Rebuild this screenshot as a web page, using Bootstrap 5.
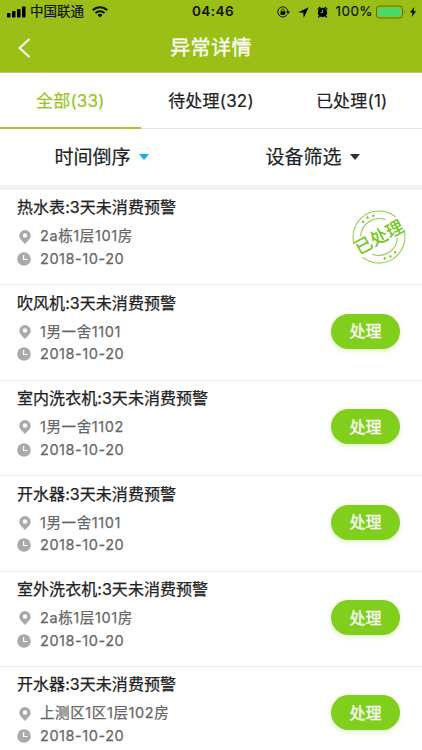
<!DOCTYPE html>
<html lang="zh-CN">
<head>
<meta charset="utf-8">
<meta name="viewport" content="width=device-width, initial-scale=1">
<title>异常详情</title>
<link rel="stylesheet" href="https://cdn.jsdelivr.net/npm/bootstrap@5.3.0/dist/css/bootstrap.min.css">
<style>
body{font-family:Inter,"Noto Sans CJK SC",sans-serif;color:#222;background:#fff;height:750px;overflow:hidden;line-height:1}
.top-area{background:#9bbf17;height:73px;border-bottom:1px solid #b9c97b}
.status{height:24px;color:#111;font-size:13px;padding:0 6px 0 7px}
.carrier{font-size:13.5px;margin-left:4px;-webkit-text-stroke:.2px}
.clock{font-size:13.5px;font-weight:600;letter-spacing:.45px;left:192px;top:5px}
.pct{font-size:13.5px;letter-spacing:.4px;margin:0 3px 0 8px;-webkit-text-stroke:.2px}
.title-bar{height:48px;color:#fff}
.title-bar h1{font-size:20px;font-weight:400;letter-spacing:.4px;line-height:1;-webkit-text-stroke:.3px}
.back{left:18px;top:14px}
.tabs{height:56px;border-bottom:1px solid #e2e2e2;font-size:17px}
.tabs a{color:#222;text-decoration:none;letter-spacing:.2px;-webkit-text-stroke:.2px}
.tabs a.on{color:#97c51d;box-shadow:inset 0 -2px #a3c52c;height:56px}
.filters{height:56px;font-size:19px;-webkit-text-stroke:.2px}
.filters .col{padding-right:8px}
.caret{width:0;height:0;border:5px solid transparent;border-top:6px solid #333;border-bottom:0;margin-left:8px}
.caret.blue{border-top-color:#1ca8ee}
.strip{height:5px;background:#f1f1f1}
.entry{height:95.45px;border-bottom:1px solid #ebebeb;padding:9.300px 22px 0 17px}
.entry h2{font-size:16px;font-weight:400;line-height:17px;margin:0 0 9px;letter-spacing:.05px;white-space:nowrap;-webkit-text-stroke:.25px}
.meta{height:22.5px;font-size:14.5px;color:#666;letter-spacing:.6px;white-space:nowrap;-webkit-text-stroke:.25px}
.meta svg{width:14px;height:14px;margin-right:9px}
.date{letter-spacing:.55px}
.go{width:69px;height:35px;background:#80cf1c;color:#fff;font-size:16px;font-weight:400;border:0;box-shadow:0 2px 5px #80cf1c40;margin-top:19px;line-height:1;-webkit-text-stroke:.3px}
.go:hover{background:#80cf1c;color:#fff}
.stamp{margin:9px -7px 0 0;overflow:visible}
</style>
<script src="https://cdn.jsdelivr.net/npm/bootstrap@5.3.0/dist/js/bootstrap.bundle.min.js"></script>
</head>
<body>
<svg width="0" height="0" class="position-absolute">
<symbol id="pin" viewBox="0 0 14 14"><path fill="#aaa" fill-rule="evenodd" d="M8 0a5.700 5.700 0 0 0-5.700 5.700C2.300 9 5.500 11 8 14c2.500-3 5.700-5 5.700-8.300A5.700 5.700 0 0 0 8 0m0 3.300a2.200 2.200 0 1 1 0 4.400 2.200 2.200 0 0 1 0-4.400"/></symbol>
<symbol id="time" viewBox="0 0 14 14"><circle cx="7" cy="7" r="6.800" fill="#aaa"/><path d="M6.600 3v4.500h4" fill="none" stroke="#fff" stroke-width="1.200"/></symbol>
</svg>
<header class="top-area">
  <div class="status d-flex align-items-center position-relative">
    <svg width="19" height="12" viewBox="0 0 19 12"><rect y="7" width="3.500" height="4.500" rx=".8"/><rect x="5" y="5" width="3.500" height="6.500" rx=".8"/><rect x="10" y="3" width="3.500" height="8.500" rx=".8"/><rect x="15" y="0.500" width="3.500" height="11" rx=".8"/></svg>
    <span class="carrier">中国联通</span>
    <svg class="ms-2" width="16" height="12" viewBox="0 0 16 12" fill="none" stroke="#111" stroke-width="2"><path d="M.8 4.200a10.300 10.300 0 0 1 14.400 0M3.500 7a6.400 6.400 0 0 1 9 0"/><path fill="#111" stroke="none" d="M5.400 9a3.700 3.700 0 0 1 5.200 0L8 11.600z"/></svg>
    <span class="clock position-absolute">04:46</span>
    <div class="ms-auto d-flex align-items-center">
      <svg width="13" height="12" viewBox="0 0 13 12"><path d="M10.300 8.500A5.100 5.100 0 1 1 11 6" fill="none" stroke="#111"/><path d="M9 5.500h4L11 8z"/><rect x="3.500" y="5.300" width="4.800" height="3.500"/><path d="M4.500 5.500V4.300a1.400 1.400 0 0 1 2.800 0v1.200" fill="none" stroke="#111" stroke-width=".8"/></svg>
      <svg class="ms-2" width="11" height="11" viewBox="0 0 11 11"><path d="M10.700.3.300 5.300l5 .4.400 5z"/></svg>
      <svg class="ms-2" width="11" height="12" viewBox="0 0 11 12"><circle cx="5.500" cy="6.500" r="4.700"/><path d="M.8 3.200 3.300 1M10.200 3.200 7.700 1M2.300 10l-1 1.500M8.700 10l1 1.500" stroke="#111" stroke-width="1.500"/><path d="M5.500 3.700v3H3.700" fill="none" stroke="#9bbf17"/></svg>
      <span class="pct">100%</span>
      <svg width="30" height="14" viewBox="0 0 30 14"><rect x=".5" y="1" width="26" height="12" rx="3" fill="none" stroke="#5c7312"/><rect x="2" y="2.500" width="23" height="9" rx="1.700" fill="#4cd964"/><path d="M28 5q1.500 2 0 4z" fill="#5c7312"/></svg>
      <svg class="ms-1" width="6" height="10" viewBox="0 0 6 10"><path d="M4.300 0 0 5.500h2.500L1.700 10 6 4.300H3.500z"/></svg>
    </div>
  </div>
  <div class="title-bar d-flex align-items-center justify-content-center position-relative">
    <svg class="back position-absolute" width="13" height="20" viewBox="0 0 13 20"><path d="M11.500 1 1.500 10l10 9" fill="none" stroke="#fff" stroke-width="2"/></svg>
    <h1 class="m-0">异常详情</h1>
  </div>
</header>
<nav class="tabs row g-0 text-center">
  <a href="#" class="col on d-flex align-items-center justify-content-center">全部(33)</a>
  <a href="#" class="col d-flex align-items-center justify-content-center">待处理(32)</a>
  <a href="#" class="col d-flex align-items-center justify-content-center">已处理(1)</a>
</nav>
<div class="filters row g-0">
  <div class="col d-flex align-items-center justify-content-center"><span>时间倒序</span><i class="caret blue"></i></div>
  <div class="col d-flex align-items-center justify-content-center"><span>设备筛选</span><i class="caret"></i></div>
</div>
<div class="strip"></div>
<main>
  <section class="entry d-flex justify-content-between align-items-start">
    <div><h2>热水表:3天未消费预警</h2>
      <div class="meta d-flex align-items-center"><svg><use href="#pin"/></svg>2a栋1层101房</div>
      <div class="meta date d-flex align-items-center"><svg><use href="#time"/></svg>2018-10-20</div></div>
    <svg class="stamp" width="56" height="60" viewBox="0 0 56 60"><g transform="rotate(-28 28 29)" fill="none" stroke="#8bcc45"><path d="M2.500 24A26 26 0 0 1 52 19M4 39A26 26 0 0 0 53.500 34"/><path d="M12 20A18.500 18.500 0 0 1 42 17M14 41A18.500 18.500 0 0 0 44 38"/><g fill="#76c51f" stroke="none"><circle cx="21" cy="8" r="1.200"/><circle cx="27" cy="6.500" r="1.200"/><circle cx="33" cy="7.500" r="1.200"/><circle cx="23" cy="50.500" r="1.200"/><circle cx="29" cy="51.500" r="1.200"/><circle cx="35" cy="50" r="1.200"/><text x="28" y="35.500" text-anchor="middle" font-size="17.500" font-weight="500">已处理</text></g></g></svg>
  </section>
  <section class="entry d-flex justify-content-between align-items-start">
    <div><h2>吹风机:3天未消费预警</h2>
      <div class="meta d-flex align-items-center"><svg><use href="#pin"/></svg>1男一舍1101</div>
      <div class="meta date d-flex align-items-center"><svg><use href="#time"/></svg>2018-10-20</div></div>
    <button class="go btn rounded-pill p-0">处理</button>
  </section>
  <section class="entry d-flex justify-content-between align-items-start">
    <div><h2>室内洗衣机:3天未消费预警</h2>
      <div class="meta d-flex align-items-center"><svg><use href="#pin"/></svg>1男一舍1102</div>
      <div class="meta date d-flex align-items-center"><svg><use href="#time"/></svg>2018-10-20</div></div>
    <button class="go btn rounded-pill p-0">处理</button>
  </section>
  <section class="entry d-flex justify-content-between align-items-start">
    <div><h2>开水器:3天未消费预警</h2>
      <div class="meta d-flex align-items-center"><svg><use href="#pin"/></svg>1男一舍1101</div>
      <div class="meta date d-flex align-items-center"><svg><use href="#time"/></svg>2018-10-20</div></div>
    <button class="go btn rounded-pill p-0">处理</button>
  </section>
  <section class="entry d-flex justify-content-between align-items-start">
    <div><h2>室外洗衣机:3天未消费预警</h2>
      <div class="meta d-flex align-items-center"><svg><use href="#pin"/></svg>2a栋1层101房</div>
      <div class="meta date d-flex align-items-center"><svg><use href="#time"/></svg>2018-10-20</div></div>
    <button class="go btn rounded-pill p-0">处理</button>
  </section>
  <section class="entry d-flex justify-content-between align-items-start">
    <div><h2>开水器:3天未消费预警</h2>
      <div class="meta d-flex align-items-center"><svg><use href="#pin"/></svg>上测区1区1层102房</div>
      <div class="meta date d-flex align-items-center"><svg><use href="#time"/></svg>2018-10-20</div></div>
    <button class="go btn rounded-pill p-0">处理</button>
  </section>
</main>
</body>
</html>
